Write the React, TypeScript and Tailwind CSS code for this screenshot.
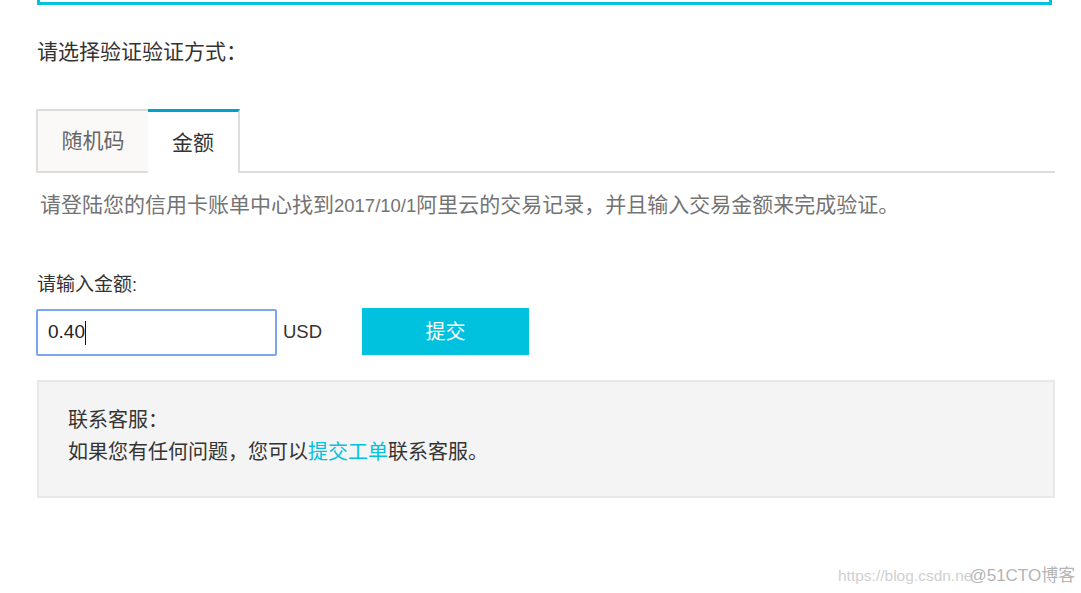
export default function App() {
  const font = { fontFamily: '"Liberation Sans", "Noto Sans CJK SC", sans-serif' };

  return (
    <div className="relative w-full h-[593px] overflow-hidden bg-white text-[20px] text-[#333]" style={font}>
      <div className="pl-[36px] pr-[26px]">
        {/* cropped box above */}
        <div className="ml-px w-[1015px] h-[5px] border-x-[3px] border-b-[3px] border-[#00c1de]"></div>

        <div className="mt-[33px] pl-px leading-[28px] text-[21px]">请选择验证验证方式：</div>

        {/* tabs */}
        <div className="mt-[43px] flex h-[64px] text-[21px]">
          <div className="w-[112px] flex items-center justify-center border-l-2 border-t-2 border-b-2 border-[#ddd] bg-[#faf9f8] text-[#666]">
            随机码
          </div>
          <div className="w-[92px] flex items-center justify-center border-t-[3px] border-t-[#00a2ca] border-r-2 border-r-[#ddd] bg-white text-[#333]">
            金额
          </div>
          <div className="flex-1 border-b-2 border-[#ddd]"></div>
        </div>

        <div className="mt-[18px] pl-[4px] leading-[28px] text-[21px] text-[#737373] whitespace-nowrap">
          请登陆您的信用卡账单中心找到<span className="text-[18.5px]">2017/10/1</span>阿里云的交易记录，并且输入交易金额来完成验证。
        </div>

        <div className="mt-[51px] pl-px leading-[28px] text-[19px]">
          请输入金额<span className="text-[18px]">:</span>
        </div>

        {/* amount input */}
        <div className="mt-[9px] flex items-start h-[48px]">
          <div className="mt-px w-[241px] h-[47px] border-2 border-[#7aa7ee] rounded-[2px] flex items-center pl-[10px] text-[19px] text-[#222]">
            <span>0.40</span>
            <span className="w-px h-[24px] bg-[#111]"></span>
          </div>
          <div className="w-[85px] h-[47px] flex items-center pl-[6px] text-[18.5px] text-[#333]">USD</div>
          <button className="w-[167px] h-[47px] bg-[#00c1de] text-white text-[20px] flex items-center justify-center">
            提交
          </button>
        </div>

        {/* help box */}
        <div className="mt-[24px] ml-px h-[118px] border-2 border-[#e8e8e8] bg-[#f4f4f4] pl-[29px] pt-[22px] leading-[32px] text-[#333]">
          <div>联系客服：</div>
          <div>
            如果您有任何问题，您可以<span className="text-[#00c1de]">提交工单</span>联系客服。
          </div>
        </div>
      </div>

      {/* watermark */}
      <div className="absolute left-[838px] top-[563px] flex items-center whitespace-nowrap">
        <span className="text-[15.5px] text-[#d0d0d0]">https://blog.csdn.ne</span>
        <span className="text-[17px] text-[#b4b4b4] -ml-[3px]">@51CTO博客</span>
      </div>
    </div>
  );
}
